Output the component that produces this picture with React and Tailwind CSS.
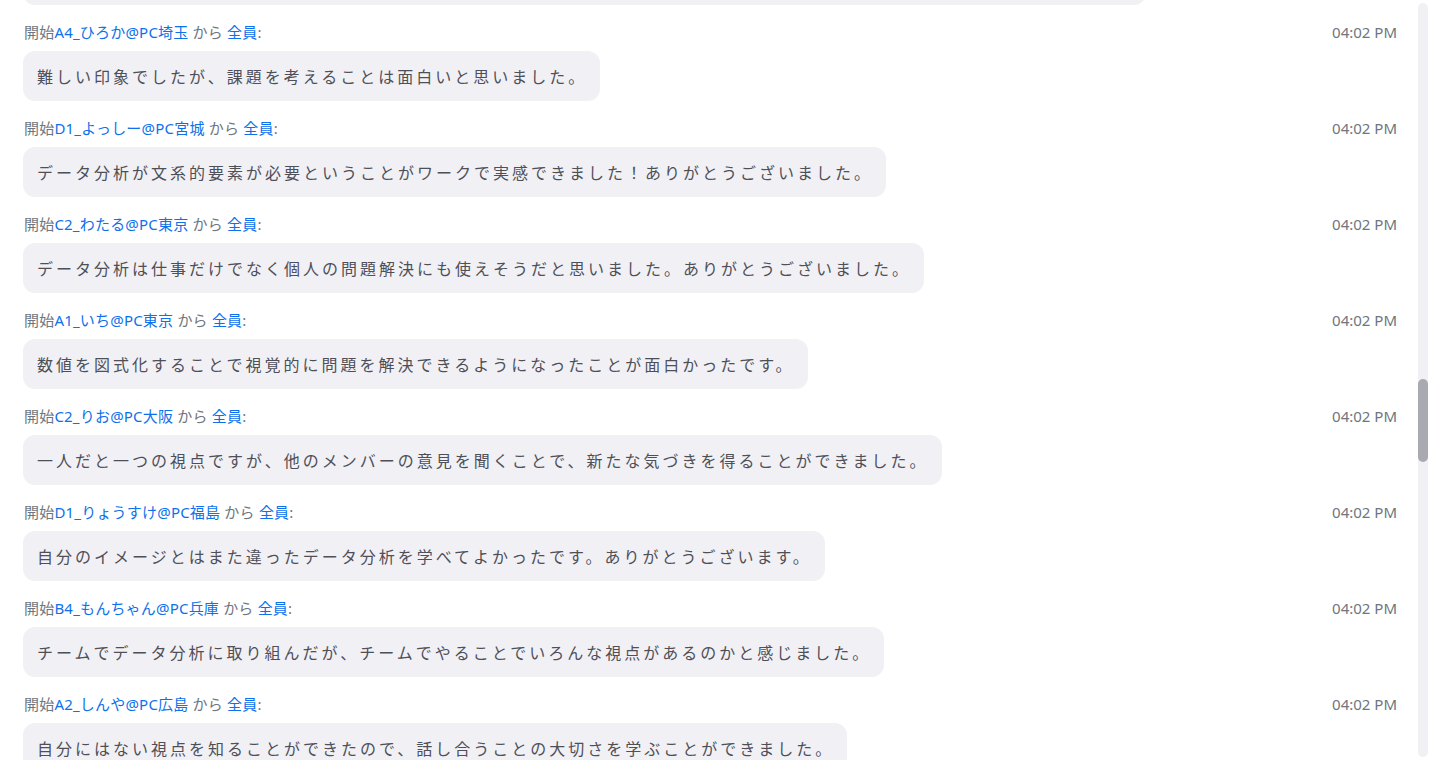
const messages = [
  ["A4_ひろか@PC埼玉", "難しい印象でしたが、課題を考えることは面白いと思いました。"],
  ["D1_よっしー@PC宮城", "データ分析が文系的要素が必要ということがワークで実感できました！ありがとうございました。"],
  ["C2_わたる@PC東京", "データ分析は仕事だけでなく個人の問題解決にも使えそうだと思いました。ありがとうございました。"],
  ["A1_いち@PC東京", "数値を図式化することで視覚的に問題を解決できるようになったことが面白かったです。"],
  ["C2_りお@PC大阪", "一人だと一つの視点ですが、他のメンバーの意見を聞くことで、新たな気づきを得ることができました。"],
  ["D1_りょうすけ@PC福島", "自分のイメージとはまた違ったデータ分析を学べてよかったです。ありがとうございます。"],
  ["B4_もんちゃん@PC兵庫", "チームでデータ分析に取り組んだが、チームでやることでいろんな視点があるのかと感じました。"],
  ["A2_しんや@PC広島", "自分にはない視点を知ることができたので、話し合うことの大切さを学ぶことができました。"],
];

export default function App() {
  return (
    <div
      className="flex h-[760px] w-[1431px] overflow-hidden bg-white"
      style={{ fontFamily: '"Noto Sans", "Noto Sans CJK JP", sans-serif' }}
    >
      <div className="flex-1 pl-[23px] pr-[21px]">
        <div className="mt-[-45px] h-[50px] w-[1123px] rounded-[12px] bg-[#f1f1f5]" />
        {messages.map(([name, text], i) => (
          <div key={i} className="mt-[17px]">
            <div className="flex h-[20px] items-center justify-between text-[15px] leading-[20px]">
              <div className="pl-[1px] tracking-[0.2px] text-[#6e7680]">
                開始<span className="text-[#0e71eb]">{name}</span> から{" "}
                <span className="text-[#0e71eb]">全員</span>:
              </div>
              <div className="text-[#6e7680]">04:02 PM</div>
            </div>
            <div className="mt-[9px] flex">
              <div
                className="flex h-[50px] items-center whitespace-nowrap rounded-[12px] bg-[#f1f1f5] pl-[14px] pr-[13px] text-[16px] tracking-[3px] text-[#4f4f58]"
                style={{ fontFamily: '"Noto Sans CJK JP", sans-serif' }}
              >
                {text}
              </div>
            </div>
          </div>
        ))}
      </div>
      <div className="mr-[3px] mt-[3px] mb-[3px] flex w-[10px] flex-col rounded-full bg-[#f1f1f5]">
        <div className="h-[376px]" />
        <div className="h-[83px] rounded-full bg-[#a9a9b1]" />
      </div>
    </div>
  );
}
